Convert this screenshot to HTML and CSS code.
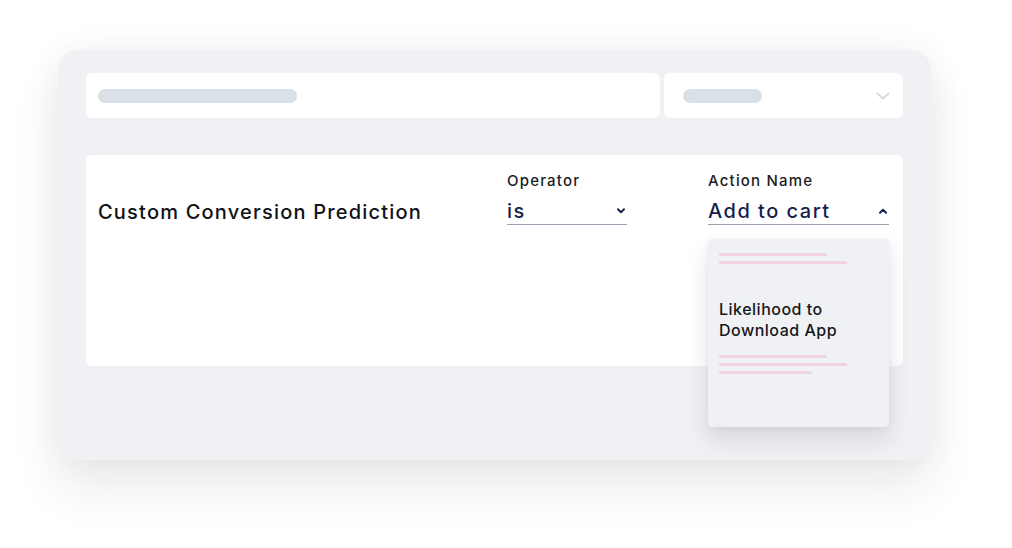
FILE: index.html
```html
<!DOCTYPE html>
<html>
<head>
<meta charset="utf-8">
<link rel="stylesheet" href="styles.css">
</head>
<body>
<div class="stage">
  <div class="panel">
    <div class="topbar">
      <div class="search"><span class="pill pill-long"></span></div>
      <div class="select">
        <span class="pill pill-short"></span>
        <svg class="chev" width="14" height="8" viewBox="0 0 14 8"><path d="M1.5 1.5 L7 6.5 L12.5 1.5" fill="none" stroke="#d3dae2" stroke-width="2" stroke-linecap="round" stroke-linejoin="round"/></svg>
      </div>
    </div>
    <div class="card">
      <div class="title">Custom Conversion Prediction</div>
      <div class="field field-op">
        <div class="label">Operator</div>
        <div class="value">
          <span>is</span>
          <svg class="caret" width="8" height="6" viewBox="0 0 8 6"><path d="M1 1.2 L4 4.2 L7 1.2" fill="none" stroke="#1a2350" stroke-width="2" stroke-linecap="round" stroke-linejoin="round"/></svg>
        </div>
      </div>
      <div class="field field-action">
        <div class="label">Action Name</div>
        <div class="value">
          <span>Add to cart</span>
          <svg class="caret" width="8" height="6" viewBox="0 0 8 6"><path d="M1 4.8 L4 1.8 L7 4.8" fill="none" stroke="#1a2350" stroke-width="2" stroke-linecap="round" stroke-linejoin="round"/></svg>
        </div>
        <div class="menu">
          <div class="lines">
            <span class="ln w108"></span>
            <span class="ln w128"></span>
          </div>
          <div class="option">Likelihood to<br>Download App</div>
          <div class="lines">
            <span class="ln w108"></span>
            <span class="ln w128"></span>
            <span class="ln w93"></span>
          </div>
        </div>
      </div>
    </div>
  </div>
</div>
</body>
</html>
```
FILE: styles.css
```css
html, body {
  margin: 0;
  padding: 0;
  background: #ffffff;
}
body {
  font-family: "Inter", "Noto Sans", sans-serif;
  width: 1012px;
  height: 548px;
  overflow: hidden;
}
.stage {
  padding: 50px 0 0 58px;
}
.panel {
  width: 873px;
  height: 410px;
  box-sizing: border-box;
  background: #f0f1f5;
  border-radius: 20px;
  padding: 23px 28px 0 28px;
  box-shadow: 0 28px 50px rgba(30, 30, 40, 0.09), 0 0 36px rgba(30, 30, 40, 0.05);
}
.topbar {
  display: flex;
  gap: 4px;
  height: 45px;
}
.search, .select {
  background: #ffffff;
  border-radius: 6px;
  display: flex;
  align-items: center;
}
.search {
  width: 574px;
  padding-left: 12px;
  box-sizing: border-box;
}
.select {
  flex: 1;
  padding: 0 13px 0 19px;
  justify-content: space-between;
}
.pill {
  display: block;
  height: 14px;
  border-radius: 7px;
  background: #d9e0e7;
}
.pill-long { width: 199px; }
.pill-short { width: 79px; }
.chev { display: block; }
.card {
  margin-top: 37px;
  height: 211px;
  background: #ffffff;
  border-radius: 6px;
  display: flex;
  padding: 17px 0 0 12px;
  box-sizing: border-box;
}
.title {
  width: 409px;
  margin-top: 28px;
  font-size: 20px;
  font-weight: 500;
  color: #111216;
  letter-spacing: 1.2px;
}
.field {
  position: relative;
}
.field-op { width: 120px; margin-right: 81px; }
.field-action { width: 181px; }
.label {
  font-size: 15px;
  font-weight: 500;
  color: #1b1c20;
  line-height: 18px;
  letter-spacing: 1.2px;
}
.value {
  margin-top: 8px;
  height: 26px;
  border-bottom: 1.5px solid #9ba0b1;
  display: flex;
  align-items: center;
  justify-content: space-between;
  font-size: 20px;
  font-weight: 500;
  color: #161f4c;
  padding-right: 2px;
  letter-spacing: 1.5px;
}
.caret { display: block; }
.menu {
  position: absolute;
  left: 0;
  top: 67px;
  width: 181px;
  height: 188px;
  box-sizing: border-box;
  background: #f0f1f5;
  border-radius: 4px;
  padding: 14px 11px 0 11px;
  box-shadow: 0 12px 24px rgba(30, 30, 40, 0.12), 0 2px 6px rgba(30, 30, 40, 0.05);
}
.lines {
  display: flex;
  flex-direction: column;
  gap: 5px;
}
.ln {
  display: block;
  height: 3px;
  border-radius: 2px;
  background: #f1d3de;
}
.w108 { width: 108px; }
.w128 { width: 128px; }
.w93 { width: 93px; }
.option {
  margin: 35px 0 14px 0;
  font-size: 16px;
  font-weight: 500;
  line-height: 21px;
  color: #16171b;
  letter-spacing: 0.5px;
}
```
